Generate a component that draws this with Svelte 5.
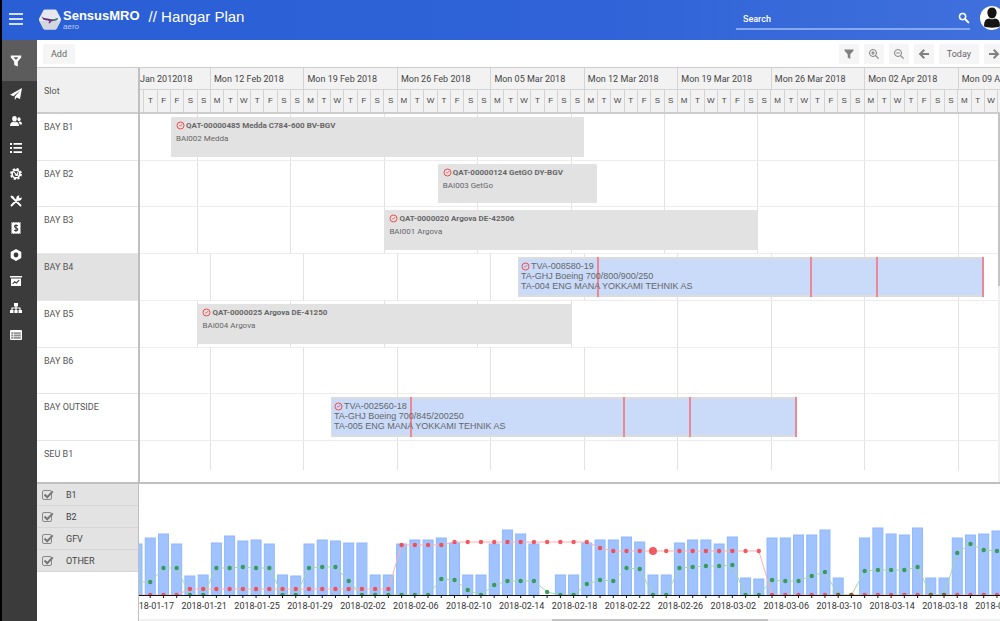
<script lang="ts">
  type Slot = { name: string; active?: boolean; shifted: number };
  type Job = {
    slot: number;
    from: number;
    to: number;
    title: string;
    lines: string[];
    planned?: boolean;
  };

  // the timeline is measured in days from its left edge
  const visibleDays = 64.4;
  const firstMonday = 5.24;
  const milestones = [16.7, 62.5, 76.8];

  const weeks = [
    "Mon 12 Feb 2018",
    "Mon 19 Feb 2018",
    "Mon 26 Feb 2018",
    "Mon 05 Mar 2018",
    "Mon 12 Mar 2018",
    "Mon 19 Mar 2018",
    "Mon 26 Mar 2018",
    "Mon 02 Apr 2018",
    "Mon 09 Apr 2018",
  ];
  const days = ["T", "F", "F", "S", "S", ...weeks.flatMap(() => ["M", "T", "W", "T", "F", "S", "S"])];

  // shifted: how many of the week lines fall one day early in this row
  const slots: Slot[] = [
    { name: "BAY B1", shifted: 7 },
    { name: "BAY B2", shifted: 7 },
    { name: "BAY B3", shifted: 7 },
    { name: "BAY B4", shifted: 0, active: true },
    { name: "BAY B5", shifted: 5 },
    { name: "BAY B6", shifted: 0 },
    { name: "BAY OUTSIDE", shifted: 0 },
    { name: "SEU B1", shifted: 0 },
  ];

  const jobs: Job[] = [
    { slot: 0, from: 2.32, to: 33.25, title: "QAT-00000485 Medda C784-600 BV-BGV", lines: ["BAI002 Medda"] },
    { slot: 1, from: 22.3, to: 34.25, title: "QAT-00000124 GetGO DY-BGV", lines: ["BAI003 GetGo"] },
    { slot: 2, from: 18.3, to: 46.28, title: "QAT-0000020 Argova DE-42506", lines: ["BAI001 Argova"] },
    {
      slot: 3,
      from: 28.3,
      to: 63.2,
      title: "TVA-008580-19",
      lines: ["TA-GHJ Boeing 700/800/900/250", "TA-004 ENG MANA YOKKAMI TEHNIK AS"],
      planned: true,
    },
    { slot: 4, from: 4.3, to: 32.3, title: "QAT-0000025 Argova DE-41250", lines: ["BAI004 Argova"] },
    {
      slot: 6,
      from: 14.3,
      to: 49.2,
      title: "TVA-002560-18",
      lines: ["TA-GHJ Boeing 700/845/200250", "TA-005 ENG MANA YOKKAMI TEHNIK AS"],
      planned: true,
    },
  ];

  let groups = $state([
    { name: "B1", checked: true },
    { name: "B2", checked: true },
    { name: "GFV", checked: true },
    { name: "OTHER", checked: true },
  ]);
  let search = $state("");

  const pct = (d: number) => (d / visibleDays) * 100;
  const lineAt = (w: number, shifted: number) => pct(firstMonday + 7 * w - (w < shifted ? 1 : 0));

  // workload chart
  const step = 13.23;
  const base = 111;
  const capacity = [
    51, 57, 61, 51, 19, 20, 52, 59, 54, 55, 51, 20, 19, 51, 55, 54, 52, 52, 20, 20, 51, 55, 55, 57, 52, 20, 20, 51, 65,
    61, 51, 0, 20, 20, 52, 55, 55, 58, 53, 20, 20, 52, 55, 55, 51, 58, 17, 16, 57, 57, 60, 60, 65, 17, 0, 57, 67, 61,
    60, 67, 17, 17, 57, 60, 61, 64,
  ];
  const green = [
    13, 13, 27, 27, 0, 0, 27, 27, 28, 27, 27, 0, 0, 27, 28, 28, 14, 0, 0, 0, 0, 0, 0, 16, 15, 5, 0, 10, 14, 14, 14, 3,
    0, 0, 11, 15, 14, 27, 26, 0, 0, 27, 28, 29, 29, 30, 0, 0, 15, 14, 14, 19, 23, 0, 0, 24, 25, 25, 25, 28, 0, 0, 42,
    51, 45, 44,
  ];
  const red = capacity.map((_, i) => {
    if (i < 4 || i > 47) return 0;
    if (i < 20) return 6;
    if (i < 24) return 50;
    if (i < 35) return 53;
    return i === 35 ? 47 : 44;
  });
  const cx = (i: number) => i * step - 2;
  const points = (values: number[]) => values.map((v, i) => `${cx(i)},${base - v}`).join(" ");
  const dateLabel = (i: number) => new Date(Date.UTC(2018, 0, 16 + i)).toISOString().slice(0, 10);
  const labelled = capacity.map((_, i) => i).filter((i) => i % 4 === 1);
</script>

{#snippet clock()}
  <svg class="clock" viewBox="0 0 9 9" aria-hidden="true">
    <circle cx="4.5" cy="4.5" r="3.5" />
    <path d="M3.200 4.800H4.700L6 3.100" />
  </svg>
{/snippet}

{#snippet funnel()}
  <svg viewBox="0 0 12 12" aria-hidden="true"><path d="M1.500 1.500h9v1.200L7.300 6.200v4.800L4.700 9.400V6.200L1.500 2.700z" /></svg>
{/snippet}

<div class="shell">
  <header>
    <button class="menu" aria-label="Menu"><i></i><i></i><i></i></button>
    <svg class="logo" viewBox="0 0 22 21" aria-hidden="true">
      <path d="M6 .5h10a2 2 0 0 1 1.7 1L21.6 9a3 3 0 0 1 0 3l-3.9 7.5a2 2 0 0 1-1.7 1H6a2 2 0 0 1-1.7-1L.4 12a3 3 0 0 1 0-3l3.9-7.5A2 2 0 0 1 6 .5z" fill="#e6e8ee" />
      <path d="M.4 12h21.2l-3.9 7.5a2 2 0 0 1-1.7 1H6a2 2 0 0 1-1.7-1z" fill="#d3d6df" />
      <path d="M2.5 7.5 5 9l9 1.4 5-1.2-.8 1.8-5 1.2-8.7-1.4z" fill="#5b2d78" />
      <path d="m8.5 10.8 4.5.8-2 2.6h-1.6l.8-2z" fill="#7f3b93" />
      <path d="m13.5 10.6 5.4-1.4-.8 1.8-4.6 1.1z" fill="#2d8a7b" />
    </svg>
    <div class="brand">
      <strong>SensusMRO</strong>
      <span>aero</span>
    </div>
    <h1>// Hangar Plan</h1>
    <div class="search">
      <input type="text" placeholder="Search" aria-label="Search" bind:value={search} />
      <svg viewBox="0 0 12 12" aria-hidden="true">
        <circle cx="4.6" cy="4.6" r="3.1" fill="none" stroke="#fff" stroke-width="1.5" />
        <path d="m7.2 7.2 3.2 3.2" stroke="#fff" stroke-width="2" stroke-linecap="round" />
      </svg>
    </div>
    <button class="avatar" aria-label="Account">
      <svg viewBox="0 0 24 24" aria-hidden="true">
        <circle cx="12" cy="12" r="12" fill="#fff" />
        <path d="M12 1.400c2.900 0 4.600 2 4.600 5 0 3.200-2 6-4.600 6s-4.600-2.800-4.600-6c0-3 1.700-5 4.600-5z" fill="#151515" />
        <path d="M4.200 20.500c-.6-5 1.300-7.500 5-8 .8.900 4.800.900 5.600 0 3.700.5 5.600 3 5 8-2 1.500-13.600 1.500-15.600 0z" fill="#151515" />
      </svg>
    </button>
  </header>

  <div class="body">
    <nav>
      <a class="current" href="#filter" aria-label="Filter">
        <svg viewBox="0 0 12 12"><path d="M.8.500h10.400v1.900L7.800 6.500v5L4.200 10V6.500L.8 2.400zM3.600 2.200 6 5l2.400-2.800z" fill-rule="evenodd" /></svg>
      </a>
      <div class="links">
        <a href="#flights" aria-label="Flights">
          <svg viewBox="0 0 12 12"><path d="M12 0 10 11 6.600 9.600 4.800 12V8.700L10 2.500 3.500 8.200 0 6.800z" /></svg>
        </a>
        <a href="#staff" aria-label="Staff">
          <svg viewBox="0 0 12 12">
            <ellipse cx="4.500" cy="3.700" rx="2.300" ry="2.800" />
            <path d="M0 11c0-3 1.500-4 3-4.300.8.700 2.200.7 3 0C7.700 7 9 8 9 11z" />
            <ellipse cx="9" cy="4.300" rx="1.600" ry="2" />
            <path d="M9.700 9.600H12c0-2-.8-2.800-2-3-.7.500-1.500.5-2 .1 1 .7 1.600 1.600 1.700 2.900z" />
          </svg>
        </a>
        <a href="#tasks" aria-label="Tasks">
          <svg viewBox="0 0 12 12"><path d="M0 1h2v2H0zM3.500 1H12v1.700H3.500zM0 5h2v2H0zM3.500 5.100H12v1.700H3.500zM0 9h2v2H0zM3.500 9.200H12v1.700H3.500z" /></svg>
        </a>
        <a href="#settings" aria-label="Settings">
          <svg viewBox="0 0 12 12">
            <circle cx="6" cy="6" r="5" fill="none" stroke="#fff" stroke-width="1.900" stroke-dasharray="2.200 1.730" />
            <circle cx="6" cy="6" r="3.900" fill="none" stroke="#fff" stroke-width="1.600" />
            <path d="M3.500 3.800 8.600 8.200M5 6.500a1.500 1.500 0 1 0 2-2" fill="none" stroke="#fff" stroke-width="1.100" />
          </svg>
        </a>
        <a href="#tools" aria-label="Tools">
          <svg viewBox="0 0 12 12">
            <path d="m1.500 10.500 7-7M3.500 3.500l7 7" stroke="#fff" stroke-width="1.900" stroke-linecap="round" />
            <path d="M.4 1.500 1.600.4 3.800 1.800 4.200 4 2 3.700z" />
            <path d="M11.500 2.200A2.700 2.700 0 1 1 9.600.5L8.700 2.200l1.200 1z" />
          </svg>
        </a>
        <a href="#billing" aria-label="Billing">
          <svg viewBox="0 0 12 12">
            <path d="m1.500 0 1.100.7L3.700 0l1.200.7L6 0l1.200.7L8.300 0l1.100.7 1.100-.7v12l-1.100-.7-1.100.7-1.100-.7L6 12l-1.100-.7-1.200.7-1.100-.7-1.100.7z" />
            <path d="M7.800 4C7.300 3 4.400 3 4.400 4.600S7.800 5.900 7.800 7.400 4.700 9 4.200 8M6 2.200v7.600" fill="none" stroke="#3b3b3b" stroke-width="1.100" />
          </svg>
        </a>
        <a href="#parts" aria-label="Parts">
          <svg viewBox="0 0 12 12"><path d="m6 0 5.300 3v6L6 12 .7 9V3zM6 3.600a2.400 2.400 0 1 0 0 4.800 2.400 2.400 0 0 0 0-4.800z" fill-rule="evenodd" /></svg>
        </a>
        <a href="#reports" aria-label="Reports">
          <svg viewBox="0 0 12 12">
            <path d="M0 1h12v1.500H0zM1 3.500h10V11H1z" />
            <path d="m2.700 8.800 2-2 1.600 1.200 2.900-2.800" fill="none" stroke="#3b3b3b" stroke-width="1.100" />
          </svg>
        </a>
        <a href="#structure" aria-label="Structure">
          <svg viewBox="0 0 12 12"><path d="M4 1h4v3.500H6.600v1h4V8H12v3H8.500V8h.9V6.600H6.600V8h1v3H4.400V8h1V6.600H2.600V8h.9v3H0V8h1.400V5.500h4v-1H4z" /></svg>
        </a>
        <a href="#ledger" aria-label="Ledger">
          <svg viewBox="0 0 12 12">
            <rect y="1" width="12" height="10" rx="1" />
            <path d="M1.200 3.300h9.600v6.500H1.200z" fill="#8f8f8f" />
            <path d="M1.200 5.400h9.600M1.200 7.600h9.600M3.500 3.300v6.500" stroke="#fff" stroke-width=".6" />
          </svg>
        </a>
      </div>
    </nav>

    <main>
      <div class="toolbar">
        <button>Add</button>
        <div class="tools">
          <button class="icon" aria-label="Filter">{@render funnel()}</button>
          <button class="icon" aria-label="Zoom in">
            <svg viewBox="0 0 12 12"><g class="lens"><circle cx="5" cy="5" r="3.500" /><path d="m7.600 7.600 3 3M3.300 5h3.400M5 3.300v3.400" /></g></svg>
          </button>
          <button class="icon" aria-label="Zoom out">
            <svg viewBox="0 0 12 12"><g class="lens"><circle cx="5" cy="5" r="3.500" /><path d="m7.600 7.600 3 3M3.300 5h3.400" /></g></svg>
          </button>
          <button class="icon" aria-label="Back">
            <svg viewBox="0 0 12 12"><path class="arrow" d="M11 6H2.500M6.300 1.800 2.100 6l4.200 4.200" /></svg>
          </button>
          <button>Today</button>
          <button class="icon" aria-label="Forward">
            <svg viewBox="0 0 12 12"><path class="arrow" d="M1 6h8.500M5.700 1.800 9.900 6l-4.200 4.200" /></svg>
          </button>
        </div>
      </div>

      <section class="planner">
        <div class="slots">
          <div class="slotHead">Slot</div>
          <div class="rows">
            {#each slots as slot}
              <div class="slot" class:active={slot.active}>{slot.name}</div>
            {/each}
          </div>
        </div>

        <div class="timeline">
          <div class="weeks">
            <div class="week first" style="flex-basis: {pct(firstMonday)}%">Jan 2012018</div>
            {#each weeks as week}
              <div class="week" style="flex-basis: {pct(7)}%">{week}</div>
            {/each}
          </div>
          <div class="days">
            <div class="day" style="flex-basis: {pct(firstMonday - 5)}%"></div>
            {#each days as day}
              <div class="day" style="flex-basis: {pct(1)}%">{day}</div>
            {/each}
          </div>
          <div class="rows">
            {#each slots as slot, i}
              <div class="lane">
                {#each weeks as _, w}
                  <i class="weekLine" style="left: {lineAt(w, slot.shifted)}%"></i>
                {/each}
                {#each jobs.filter((j) => j.slot === i) as job}
                  <article
                    class="job"
                    class:planned={job.planned}
                    style="left: {pct(job.from)}%; width: {pct(job.to - job.from)}%"
                  >
                    {#if job.planned}
                      {#each milestones as m}
                        <i class="milestone" style="left: {m}%"></i>
                      {/each}
                      <i class="milestone end"></i>
                    {/if}
                    <h2>{@render clock()}{job.title}</h2>
                    {#each job.lines as line}
                      <p>{line}</p>
                    {/each}
                  </article>
                {/each}
              </div>
            {/each}
            <div class="scrollY"></div>
          </div>
        </div>
      </section>

      <section class="workload">
        <div class="groups">
          {#each groups as group}
            <label>
              <span class="box">
                <input type="checkbox" bind:checked={group.checked} />
                {#if group.checked}
                  <svg viewBox="0 0 12 10" aria-hidden="true"><path d="m2.500 4.500 2.700 2.700 5.600-5.800" /></svg>
                {/if}
              </span>
              {group.name}
            </label>
          {/each}
        </div>

        <div class="chart">
          <svg role="img" aria-label="Workload">
            {#each capacity as value, i}
              {#if value}
                <rect class="bar" x={cx(i) - 5} y={base - value} width="10" height={value} />
              {/if}
            {/each}
            <svg class="plot" height={base}>
              <polyline class="redLine" points={points(red)} />
              <polyline class="greenLine" points={points(green)} />
              {#each red as value, i}
                <circle class="redDot" cx={cx(i)} cy={base - value} r={i === 39 ? 4 : 2.2} />
              {/each}
              {#each green as value, i}
                <circle class="greenDot" class:both={value === 0 && red[i] === 0} cx={cx(i)} cy={base - value} r="2.2" />
              {/each}
            </svg>
            <line class="axis" x1="0" x2="100%" y1={base + 0.5} y2={base + 0.5} />
            {#each capacity as _, i}
              <line class="axis" x1={cx(i)} x2={cx(i)} y1={base} y2={base + 3} />
            {/each}
            {#each labelled as i}
              <text x={cx(i) + 1} y={base + 14}>{dateLabel(i)}</text>
            {/each}
          </svg>
          <div class="scrollX"></div>
        </div>
      </section>
    </main>
  </div>
</div>

<style>
  :global(body) {
    background: #fff;
  }
  .shell {
    min-height: 100vh;
    box-sizing: border-box;
    border-left: 2px solid #000;
    display: flex;
    flex-direction: column;
    overflow: hidden;
    font-family: Roboto, "Liberation Sans", sans-serif;
    color: #555;
  }
  button {
    font-family: inherit;
    border: none;
    padding: 0;
    cursor: pointer;
  }

  /* top bar */
  header {
    height: 40px;
    display: flex;
    align-items: center;
    background: linear-gradient(90deg, #2a5ed5, #2f63d7 60%, #4070dc);
    color: #fff;
    font-family: "Liberation Sans", Arial, sans-serif;
  }
  .menu {
    width: 14px;
    margin: 0 0 2px 7px;
    background: none;
    display: flex;
    flex-direction: column;
    gap: 3px;
  }
  .menu i {
    height: 2px;
    background: #d3dffa;
  }
  .logo {
    width: 22px;
    height: 21px;
    margin: 0 2px 2px 16px;
  }
  .brand {
    display: flex;
    flex-direction: column;
  }
  .brand strong {
    font-size: 13px;
    line-height: 13px;
  }
  .brand span {
    font-size: 8px;
    line-height: 9px;
    color: #b9cdf6;
  }
  h1 {
    margin: 0 0 7px 9px;
    font-size: 15px;
    font-weight: normal;
    line-height: 18px;
  }
  .search {
    width: 234px;
    height: 22px;
    margin: 0 10px 3px auto;
    border-bottom: 2px solid #86a9ee;
    box-sizing: border-box;
    display: flex;
    align-items: center;
  }
  .search input {
    flex: 1;
    min-width: 0;
    border: none;
    outline: none;
    background: none;
    padding: 2px 7px 0;
    color: #fff;
    font-family: Roboto, sans-serif;
    font-size: 9px;
    font-weight: 500;
  }
  .search input::placeholder {
    color: #fff;
    opacity: 1;
  }
  .search svg {
    width: 12px;
    height: 12px;
  }
  .avatar {
    flex: none;
    width: 24px;
    height: 24px;
    margin: 0 -4px 5px 0;
    background: none;
  }
  .avatar svg {
    display: block;
  }

  .body {
    flex: 1;
    display: flex;
  }

  /* side bar */
  nav {
    width: 35px;
    flex: none;
    background: #3b3b3b;
  }
  nav a {
    display: flex;
    align-items: center;
    justify-content: center;
    padding-right: 7px;
  }
  nav .current {
    height: 41px;
    background: #5c5c5c;
  }
  .links {
    height: 267px;
    display: grid;
    grid-auto-rows: 1fr;
  }
  nav svg {
    width: 12px;
    height: 12px;
    fill: #fff;
  }

  main {
    flex: 1;
    min-width: 0;
    display: flex;
    flex-direction: column;
  }
  .toolbar {
    height: 27px;
    display: flex;
    align-items: center;
    justify-content: space-between;
    padding-left: 6px;
    border-bottom: 1px solid #ccc;
  }
  .toolbar button {
    height: 20px;
    padding: 0 8px;
    background: #f5f5f5;
    color: #666;
    font-size: 9px;
  }
  .toolbar .icon {
    width: 20px;
    padding: 0 4px;
  }
  .toolbar svg {
    display: block;
    width: 12px;
    height: 12px;
    fill: #808080;
  }
  .lens {
    fill: none;
    stroke: #808080;
  }
  .lens path {
    stroke-width: 1.2;
  }
  .arrow {
    fill: none;
    stroke: #808080;
    stroke-width: 2;
  }
  .tools {
    display: flex;
    gap: 5px;
    margin-right: -4px;
  }

  /* slots and timeline */
  .planner {
    display: flex;
    border-bottom: 2px solid #bfbfbf;
  }
  .slots {
    width: 101px;
    flex: none;
    border-right: 2px solid #bfbfbf;
    font-size: 9px;
  }
  .slotHead {
    height: 44px;
    line-height: 46px;
    padding-left: 7px;
    background: #f0f0f0;
    border-bottom: 2px solid #ccc;
  }
  .rows {
    height: 368px;
    position: relative;
    display: grid;
    grid-template-rows: repeat(7, 1fr) 41px;
  }
  .slot {
    padding: 6px 7px;
    line-height: 14px;
    border-bottom: 1px solid #e6e6e6;
  }
  .slot.active {
    background: #e2e2e2;
  }
  .slot:last-child {
    border-bottom: none;
  }
  .timeline {
    flex: 1;
    min-width: 0;
    overflow: hidden;
  }
  .weeks,
  .days {
    display: flex;
    background: #f2f2f2;
    overflow: hidden;
  }
  .week {
    flex: none;
    box-sizing: border-box;
    height: 22px;
    line-height: 22px;
    padding-left: 3px;
    border-left: 1px solid #d4d4d4;
    border-bottom: 1px solid #d4d4d4;
    font-size: 9px;
    white-space: nowrap;
    color: #444;
  }
  .week.first {
    padding-left: 0;
    border-left: none;
  }
  .days {
    border-bottom: 2px solid #ccc;
  }
  .day {
    flex: none;
    box-sizing: border-box;
    height: 22px;
    line-height: 22px;
    border-left: 1px solid #d4d4d4;
    text-align: center;
    font-family: "Liberation Sans", Arial, sans-serif;
    font-size: 8px;
    color: #444;
  }
  .day:first-child {
    border-left: none;
  }
  .lane {
    position: relative;
    border-bottom: 1px solid #ececec;
  }
  .lane:nth-child(8) {
    border-bottom: none;
  }
  .weekLine {
    position: absolute;
    top: 0;
    bottom: 0;
    width: 1px;
    background: #e2e2e2;
  }
  .lane:nth-child(8) .weekLine {
    bottom: 12px;
  }
  .job {
    position: absolute;
    top: 3px;
    bottom: 3px;
    box-sizing: border-box;
    padding: 2px 5px;
    background: #e2e2e2;
    border-radius: 1px;
    font-size: 8px;
    line-height: 13px;
    color: #666;
    white-space: nowrap;
  }
  .job h2,
  .job p {
    position: relative;
    margin: 0;
    font-size: inherit;
  }
  .job h2 {
    display: flex;
    align-items: center;
    gap: 1px;
  }
  .clock {
    width: 9px;
    height: 9px;
    fill: none;
    stroke: #ee4b4b;
  }
  .clock path {
    stroke-width: 0.8;
  }
  .job.planned {
    padding: 2px;
    border: solid #dcdcdc;
    border-width: 2px 0 2px 1px;
    background: #cadbf9;
    font-family: "Liberation Sans", Arial, sans-serif;
    font-size: 9px;
    line-height: 10px;
  }
  .planned h2 {
    font-weight: normal;
  }
  .milestone {
    position: absolute;
    top: -2px;
    bottom: -2px;
    width: 2px;
    background: #ee8794;
  }
  .milestone.end {
    right: 0;
  }
  .scrollY {
    position: absolute;
    top: 0;
    right: 0;
    bottom: 0;
    width: 2px;
    background: linear-gradient(#c4c4c4 172px, #efefef 172px);
  }

  /* workload */
  .workload {
    flex: 1;
    display: flex;
  }
  .groups {
    width: 101px;
    flex: none;
    border-right: 1px solid #bfbfbf;
  }
  .groups label {
    height: 22px;
    box-sizing: border-box;
    display: flex;
    align-items: center;
    gap: 12px;
    padding-left: 5px;
    background: #e3e3e3;
    border-bottom: 1px solid #d6d6d6;
    color: #444;
    font-size: 9px;
  }
  .box {
    display: grid;
    width: 12px;
    height: 10px;
  }
  .box input,
  .box svg {
    grid-area: 1 / 1;
  }
  .box input {
    appearance: none;
    margin: 0;
    width: 10px;
    height: 10px;
    border: 1px solid #888;
    border-radius: 2px;
  }
  .box svg {
    width: 12px;
    height: 10px;
    fill: none;
    stroke: #777;
    stroke-width: 2;
    pointer-events: none;
  }
  .chart {
    flex: 1;
    min-width: 0;
    display: flex;
    flex-direction: column;
    justify-content: space-between;
  }
  .chart > svg {
    display: block;
    width: 100%;
    height: 130px;
  }
  .plot {
    overflow: hidden;
  }
  .bar {
    fill: #a0c3ff;
    stroke: #8fb8fd;
  }
  .redLine,
  .greenLine {
    fill: none;
    stroke: #fbb0b0;
  }
  .greenLine {
    stroke: #a5d6ad;
  }
  .redDot {
    fill: #f0404a;
    fill-opacity: 0.85;
  }
  .greenDot {
    fill: #2e9450;
    fill-opacity: 0.9;
  }
  .greenDot.both {
    fill: #6b6a24;
  }
  .axis {
    stroke: #111;
  }
  text {
    fill: #333;
    font-size: 9px;
    text-anchor: middle;
  }
  .scrollX {
    height: 2px;
    background: linear-gradient(90deg, #f0f0f0 48%, #c4c4c4 48%, #c4c4c4 73%, #f0f0f0 73%);
  }
</style>
